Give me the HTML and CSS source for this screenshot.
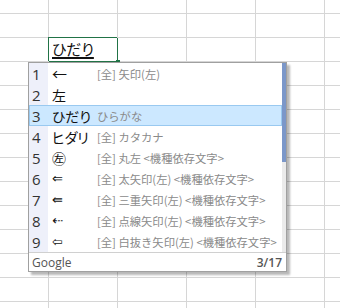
FILE: index.html
```html
<!DOCTYPE html>
<html lang="ja">
<head>
    <meta charset="UTF-8">
    <title>IME 変換候補</title>
    <link rel="stylesheet" href="styles.css">
</head>
<body>
    <div class="sheet" id="sheet"></div>

    <template id="activeCell">
        <div class="cell active">
            <span class="editing">ひだり</span>
            <div class="fill-handle"></div>

            <div class="candidates">
                <div class="candidate-body">
                    <ul class="list">
                        <li class="row"><span class="num">1</span><span class="word arrow">←</span><span class="note">[全] 矢印(左)</span></li>
                        <li class="row"><span class="num">2</span><span class="word">左</span><span class="note"></span></li>
                        <li class="row selected"><span class="num">3</span><span class="word">ひだり</span><span class="note">ひらがな</span></li>
                        <li class="row"><span class="num">4</span><span class="word">ヒダリ</span><span class="note">[全] カタカナ</span></li>
                        <li class="row"><span class="num">5</span><span class="word">㊧</span><span class="note">[全] 丸左 &lt;機種依存文字&gt;</span></li>
                        <li class="row"><span class="num">6</span><span class="word sym">⇐</span><span class="note">[全] 太矢印(左) &lt;機種依存文字&gt;</span></li>
                        <li class="row"><span class="num">7</span><span class="word sym">⇚</span><span class="note">[全] 三重矢印(左) &lt;機種依存文字&gt;</span></li>
                        <li class="row"><span class="num">8</span><span class="word sym">⇠</span><span class="note">[全] 点線矢印(左) &lt;機種依存文字&gt;</span></li>
                        <li class="row"><span class="num">9</span><span class="word sym">⇦</span><span class="note">[全] 白抜き矢印(左) &lt;機種依存文字&gt;</span></li>
                    </ul>
                    <div class="scrollbar"><div class="thumb"></div></div>
                </div>
                <div class="footer">
                    <span>Google</span>
                    <span class="count">3/17</span>
                </div>
            </div>
        </div>
    </template>

    <script>
        // シートのセルを作る (6列 x 14行)、3行目2列目が編集中のセル
        const sheet = document.getElementById('sheet');
        const activeTpl = document.getElementById('activeCell');

        for (let r = 0; r < 14; r++) {
            for (let c = 0; c < 6; c++) {
                if (r === 2 && c === 1) {
                    sheet.appendChild(activeTpl.content.cloneNode(true));
                } else {
                    const cell = document.createElement('div');
                    cell.className = 'cell';
                    sheet.appendChild(cell);
                }
            }
        }
    </script>
</body>
</html>
```

FILE: styles.css
```css
body {
    margin: 0;
    background-color: white;
    font-family: "Noto Sans", "Noto Sans CJK JP", sans-serif;
    overflow: hidden;
}

.sheet {
    display: grid;
    grid-template-columns: 49px repeat(5, 69px);
    grid-template-rows: 14px repeat(13, 24px);
    width: 340px;
    height: 308px;
    overflow: hidden;
}

.cell {
    box-sizing: border-box;
    border-right: 1px solid #d6d6d6;
    border-bottom: 1px solid #d6d6d6;
}

.active {
    position: relative;
    z-index: 1;
    border-right: 1px solid #217346;
    border-bottom: 1px solid #217346;
    box-shadow: -1px -1px 0 0 #217346;
    padding-left: 3px;
}

.editing {
    display: inline-block;
    margin-top: 1px;
    font-family: "Noto Sans CJK JP", sans-serif;
    font-feature-settings: "palt";
    font-size: 15px;
    line-height: 20px;
    color: #111;
    text-decoration: underline;
    text-decoration-thickness: 2px;
    text-underline-offset: 2px;
}

.fill-handle {
    position: absolute;
    right: -3px;
    bottom: -3px;
    width: 4px;
    height: 4px;
    background-color: #217346;
}

.candidates {
    position: absolute;
    left: -21px;
    top: 24px;
    width: 259px;
    box-sizing: border-box;
    border: 1px solid #a0a0a0;
    background-color: white;
    box-shadow: 3px 3px 2px rgba(0, 0, 0, 0.28);
}

.candidate-body {
    display: flex;
}

.list {
    flex: 1;
    margin: 0;
    padding: 0;
    list-style: none;
}

.row {
    display: flex;
    align-items: center;
    height: 21px;
    box-sizing: border-box;
}

.selected {
    background-color: #cce8ff;
    border: 1px solid #99c9f0;
}

.num {
    flex: none;
    width: 19px;
    height: 100%;
    box-sizing: border-box;
    padding-left: 3px;
    display: flex;
    align-items: center;
    background-color: #eef0fa;
    font-family: "Open Sans", sans-serif;
    font-size: 15px;
    color: #333;
}

.selected .num {
    background-color: transparent;
    margin-left: -1px;
}

.word {
    flex: none;
    width: 45px;
    padding-left: 4px;
    overflow: hidden;
    font-family: "Noto Sans CJK JP", sans-serif;
    font-feature-settings: "palt";
    font-size: 14px;
    color: #111;
    white-space: nowrap;
}

.arrow {
    font-size: 15px;
    font-feature-settings: normal;
}

.sym {
    font-family: "DejaVu Sans", sans-serif;
    font-size: 13px;
}

.note {
    font-family: "Noto Sans CJK JP", sans-serif;
    font-size: 11.3px;
    color: #8a8a8a;
    white-space: nowrap;
}

.scrollbar {
    width: 4px;
    background-color: #ebebeb;
}

.thumb {
    height: 99px;
    background-color: #7b97c9;
}

.footer {
    display: flex;
    justify-content: space-between;
    align-items: center;
    height: 18px;
    padding: 0 4px 0 3px;
    border-top: 1px solid #d0d0d0;
    font-family: "Open Sans", sans-serif;
    font-size: 12px;
    color: #555;
}

.count {
    font-weight: 600;
}
```
